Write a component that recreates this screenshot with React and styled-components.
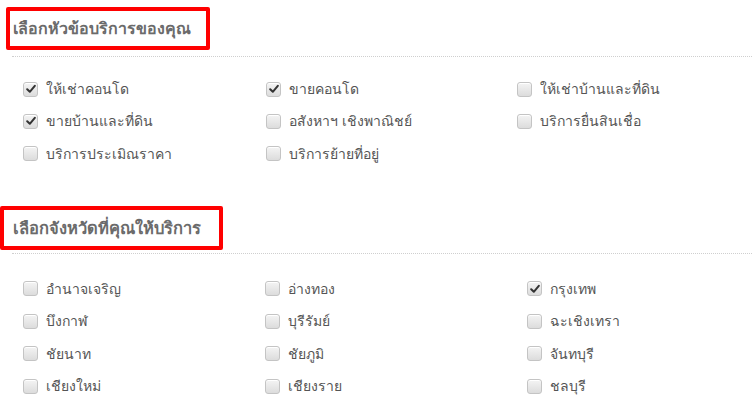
import React from 'react';
import styled, { createGlobalStyle } from 'styled-components';

const GlobalStyle = createGlobalStyle`
  html, body {
    margin: 0;
    padding: 0;
    background: #fff;
  }
  body {
    font-family: "Liberation Sans", "Noto Sans", "DejaVu Sans", sans-serif;
  }
`;

const Page = styled.div`
  width: 752px;
  height: 406px;
  overflow: hidden;
  background: #fff;
`;

const Section = styled.section`
  padding-top: ${p => p.$top}px;
`;

const HeadingBox = styled.div`
  margin-left: ${p => p.$left}px;
  width: ${p => p.$width}px;
  height: ${p => p.$height}px;
  box-sizing: border-box;
  border: 4px solid #ff0000;
  border-radius: 2px;
  display: flex;
  align-items: center;
  padding-left: ${p => 13 - p.$left - 4}px;
`;

const Heading = styled.h3`
  margin: 0;
  font-size: ${p => p.$size}px;
  font-weight: bold;
  color: #6b6b6b;
`;

const Divider = styled.div`
  margin: ${p => p.$gap}px 0 0 12px;
  border-top: 1px dotted #cfcfcf;
`;

const Grid = styled.div`
  display: grid;
  grid-template-columns: ${p => p.$cols};
  grid-auto-rows: ${p => p.$row}px;
  padding: ${p => p.$pad}px 0 0 23px;
`;

const Option = styled.label`
  display: flex;
  align-items: center;
  gap: 8px;
  font-size: 14px;
  color: #555;
  height: 14px;
  cursor: pointer;
`;

const Box = styled.span`
  width: 13px;
  height: 13px;
  border: 1px solid #c4c4c4;
  border-radius: 3px;
  background: linear-gradient(#f4f4f4, #dcdcdc);
  box-shadow: inset 0 1px 0 #fff;
  display: flex;
  align-items: center;
  justify-content: center;
  flex: none;
`;

const Check = () => (
  <svg width="10" height="10" viewBox="0 0 10 10">
    <path d="M1.2 5.2 L3.8 7.8 L8.8 1.8" fill="none" stroke="#333" strokeWidth="2" strokeLinecap="round" strokeLinejoin="round" />
  </svg>
);

const Checkbox = ({ label, checked }) => (
  <Option>
    <Box>{checked && <Check />}</Box>
    <span>{label}</span>
  </Option>
);

const services = [
  ['ให้เช่าคอนโด', true],
  ['ขายคอนโด', true],
  ['ให้เช่าบ้านและที่ดิน', false],
  ['ขายบ้านและที่ดิน', true],
  ['อสังหาฯ เชิงพาณิชย์', false],
  ['บริการยื่นสินเชื่อ', false],
  ['บริการประเมิณราคา', false],
  ['บริการย้ายที่อยู่', false],
];

const provinces = [
  ['อำนาจเจริญ', false],
  ['อ่างทอง', false],
  ['กรุงเทพ', true],
  ['บึงกาฬ', false],
  ['บุรีรัมย์', false],
  ['ฉะเชิงเทรา', false],
  ['ชัยนาท', false],
  ['ชัยภูมิ', false],
  ['จันทบุรี', false],
  ['เชียงใหม่', false],
  ['เชียงราย', false],
  ['ชลบุรี', false],
];

export default function App() {
  return (
    <Page>
      <GlobalStyle />
      <Section $top={7}>
        <HeadingBox $left={6} $width={204} $height={43}>
          <Heading $size={16}>เลือกหัวข้อบริการของคุณ</Heading>
        </HeadingBox>
        <Divider $gap={6} />
        <Grid $cols="243px 251px 1fr" $row={32.3} $pad={25}>
          {services.map(([l, c]) => (
            <Checkbox key={l} label={l} checked={c} />
          ))}
        </Grid>
      </Section>
      <Section $top={27}>
        <HeadingBox $left={0} $width={223} $height={44}>
          <Heading $size={16.5}>เลือกจังหวัดที่คุณให้บริการ</Heading>
        </HeadingBox>
        <Divider $gap={3} />
        <Grid $cols="242px 262px 1fr" $row={32.4} $pad={28}>
          {provinces.map(([l, c]) => (
            <Checkbox key={l} label={l} checked={c} />
          ))}
        </Grid>
      </Section>
    </Page>
  );
}
